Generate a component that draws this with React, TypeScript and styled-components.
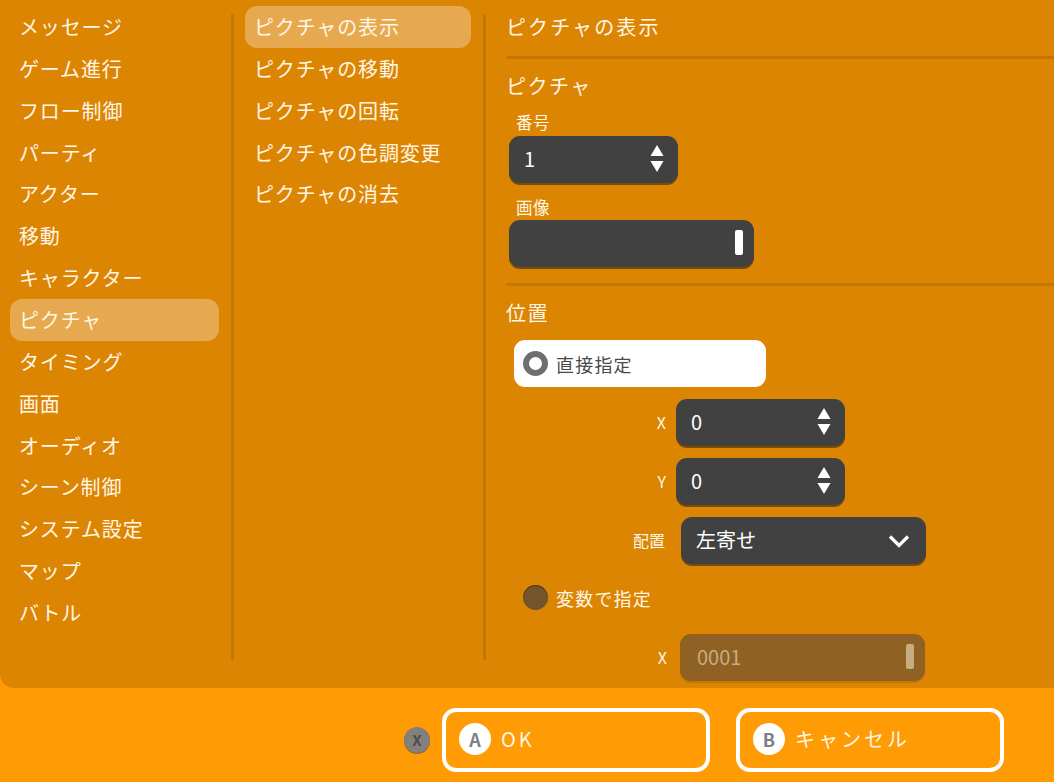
import React from "react";
import styled, { createGlobalStyle } from "styled-components";

const Global = createGlobalStyle`
  html, body { margin: 0; padding: 0; background: #ff9b05; }
  body { font-family: "Noto Sans CJK JP", "Noto Sans", sans-serif; }
`;

const Screen = styled.div`
  width: 1054px;
  height: 782px;
  display: flex;
  flex-direction: column;
  overflow: hidden;
  background: #ff9b05;
  color: #fff6e6;
`;

const Panel = styled.div`
  height: 688px;
  flex: none;
  display: flex;
  background: #dc8503;
  border-bottom-left-radius: 14px;
  overflow: hidden;
`;

const Column = styled.div<{ $width: number; $left: number }>`
  width: ${(p) => p.$width}px;
  flex: none;
  height: 660px;
  padding: 6px 12px 0 ${(p) => p.$left}px;
  box-sizing: border-box;
  display: flex;
  flex-direction: column;
`;

const Divider = styled.div`
  width: 3px;
  height: 646px;
  margin-top: 14px;
  flex: none;
  background: #c47603;
  border-radius: 1px;
`;

const Item = styled.div<{ $active?: boolean }>`
  height: 41.86px;
  flex: none;
  display: flex;
  align-items: center;
  padding: 0 0 1px 9px;
  box-sizing: border-box;
  border-radius: 12px;
  font-size: 20px;
  letter-spacing: 0.85px;
  white-space: nowrap;
  background: ${(p) => (p.$active ? "#e6a94f" : "transparent")};
`;

const Detail = styled.div`
  flex: 1;
  display: flex;
  flex-direction: column;
  padding-left: 20px;
  min-width: 0;
`;

const Title = styled.div`
  height: 56px;
  padding-bottom: 3px;
  box-sizing: border-box;
  flex: none;
  display: flex;
  align-items: center;
  font-size: 20px;
  letter-spacing: 2.1px;
`;

const Rule = styled.div<{ $mt?: number }>`
  height: 3px;
  flex: none;
  margin-top: ${(p) => p.$mt ?? 0}px;
  background: #c47603;
`;

const Section = styled.div`
  height: 54px;
  padding-bottom: 1px;
  box-sizing: border-box;
  flex: none;
  display: flex;
  align-items: center;
  font-size: 20px;
  letter-spacing: 1.5px;
`;

const FieldLabel = styled.div<{ $h: number; $top?: number; $bottom?: number }>`
  height: ${(p) => p.$h}px;
  flex: none;
  display: flex;
  align-items: center;
  box-sizing: border-box;
  padding-left: 10px;
  padding-top: ${(p) => p.$top ?? 0}px;
  padding-bottom: ${(p) => p.$bottom ?? 0}px;
  font-size: 16.5px;
  letter-spacing: 0.5px;
`;

const Row = styled.div<{ $left?: number; $mt?: number }>`
  display: flex;
  align-items: center;
  flex: none;
  margin-left: ${(p) => p.$left ?? 3}px;
  margin-top: ${(p) => p.$mt ?? 0}px;
`;

const RowLabel = styled.div<{ $w: number; $pad?: number }>`
  width: ${(p) => p.$w}px;
  flex: none;
  text-align: right;
  font-size: 16px;
  padding-right: ${(p) => p.$pad ?? 10}px;
  padding-bottom: 2px;
  box-sizing: border-box;
  white-space: nowrap;
`;

const Field = styled.div<{ $w: number; $muted?: boolean; $right?: number }>`
  width: ${(p) => p.$w}px;
  height: 47px;
  flex: none;
  display: flex;
  align-items: center;
  justify-content: space-between;
  box-sizing: border-box;
  padding: 0 ${(p) => p.$right ?? 14}px 2px ${(p) => (p.$muted ? 17 : 15)}px;
  border-radius: 11px;
  background: ${(p) => (p.$muted ? "#8f6122" : "#414141")};
  box-shadow: 0 2px 0 ${(p) => (p.$muted ? "#c47603" : "#7a4c0a")};
  font-size: 20px;
  color: ${(p) => (p.$muted ? "#c9ab82" : "#fff")};
`;

const Cursor = styled.div<{ $muted?: boolean }>`
  width: 8px;
  height: 25px;
  border-radius: 2px;
  background: ${(p) => (p.$muted ? "#c9ab82" : "#fff")};
`;

const ChevronSvg = styled.svg`
  margin-top: 3px;
`;

const Spin = () => (
  <svg width="14" height="29" viewBox="0 0 14 29" aria-hidden="true">
    <path d="M7 1 L13.5 12 H0.5 Z" fill="#fff" />
    <path d="M7 28 L13.5 17 H0.5 Z" fill="#fff" />
  </svg>
);

const Chevron = () => (
  <ChevronSvg width="22" height="14" viewBox="0 0 22 14" aria-hidden="true">
    <path d="M2 2.5 L11 11.5 L20 2.5" fill="none" stroke="#fff" strokeWidth="3.2" />
  </ChevronSvg>
);

const RadioSelected = styled.div`
  width: 252px;
  height: 47px;
  margin-left: 8px;
  flex: none;
  display: flex;
  align-items: center;
  gap: 8px;
  padding-left: 9px;
  box-sizing: border-box;
  background: #fff;
  border-radius: 11px;
  color: #4a4a4a;
  font-size: 18px;
  letter-spacing: 1.2px;
`;

const RadioPlain = styled.div`
  height: 35px;
  margin-left: 17px;
  margin-top: 16px;
  flex: none;
  display: flex;
  align-items: center;
  gap: 8px;
  font-size: 18px;
  letter-spacing: 1.2px;
`;

const RingDot = styled.div`
  width: 25px;
  height: 25px;
  box-sizing: border-box;
  border-radius: 50%;
  border: 6px solid #6f6f6f;
  background: #fff;
  flex: none;
`;

const OffDot = styled.div`
  width: 25px;
  height: 25px;
  border-radius: 50%;
  background: #74542a;
  box-shadow: inset 0 1px 1px #4d3516;
  flex: none;
`;

const Footer = styled.div`
  flex: 1;
  display: flex;
  align-items: center;
  justify-content: flex-end;
  padding: 9px 50px 0 0;
`;

const XBadge = styled.div`
  width: 26px;
  height: 26px;
  border-radius: 50%;
  background: #83807b;
  box-shadow: 0 1px 0 #8a6a2c;
  color: #4c4c52;
  font-size: 15px;
  font-weight: 700;
  display: flex;
  align-items: center;
  justify-content: center;
  margin-right: 12px;
`;

const Button = styled.div<{ $w: number; $ml?: number }>`
  width: ${(p) => p.$w}px;
  height: 64px;
  box-sizing: border-box;
  border: 4.5px solid #fff;
  border-radius: 14px;
  display: flex;
  align-items: center;
  gap: 10px;
  padding: 0 0 2px 13px;
  margin-left: ${(p) => p.$ml ?? 0}px;
  font-size: 20px;
  letter-spacing: 3px;
  color: #fff6e6;
`;

const ButtonKey = styled.div`
  width: 32px;
  height: 32px;
  border-radius: 50%;
  background: #fff;
  color: #7d7f86;
  font-size: 18px;
  font-weight: 700;
  letter-spacing: 0;
  display: flex;
  align-items: center;
  justify-content: center;
  flex: none;
`;

const categories = ["メッセージ", "ゲーム進行", "フロー制御", "パーティ", "アクター", "移動", "キャラクター", "ピクチャ", "タイミング", "画面", "オーディオ", "シーン制御", "システム設定", "マップ", "バトル"];
const commands = ["ピクチャの表示", "ピクチャの移動", "ピクチャの回転", "ピクチャの色調変更", "ピクチャの消去"];

export default function App() {
  return (
    <Screen>
      <Global />
      <Panel>
        <Column $width={231} $left={10}>
          {categories.map((c) => (
            <Item key={c} $active={c === "ピクチャ"}>{c}</Item>
          ))}
        </Column>
        <Divider />
        <Column $width={249} $left={11}>
          {commands.map((c, i) => (
            <Item key={c} $active={i === 0}>{c}</Item>
          ))}
        </Column>
        <Divider />
        <Detail>
          <Title>ピクチャの表示</Title>
          <Rule />
          <Section>ピクチャ</Section>
          <FieldLabel $h={23} $bottom={5}>番号</FieldLabel>
          <Row><Field $w={169}>1<Spin /></Field></Row>
          <FieldLabel $h={37} $top={10}>画像</FieldLabel>
          <Row><Field $w={245} $right={11}><span /><Cursor /></Field></Row>
          <Rule $mt={16} />
          <Section>位置</Section>
          <RadioSelected><RingDot />直接指定</RadioSelected>
          <Row $left={100} $mt={12}>
            <RowLabel $w={70}>X</RowLabel>
            <Field $w={169}>0<Spin /></Field>
          </Row>
          <Row $left={100} $mt={12}>
            <RowLabel $w={70}>Y</RowLabel>
            <Field $w={169}>0<Spin /></Field>
          </Row>
          <Row $left={100} $mt={12}>
            <RowLabel $w={75} $pad={16}>配置</RowLabel>
            <Field $w={245} $right={16}>左寄せ<Chevron /></Field>
          </Row>
          <RadioPlain><OffDot />変数で指定</RadioPlain>
          <Row $left={100} $mt={19}>
            <RowLabel $w={74} $pad={13}>X</RowLabel>
            <Field $w={245} $muted $right={11}>0001<Cursor $muted /></Field>
          </Row>
        </Detail>
      </Panel>
      <Footer>
        <XBadge>X</XBadge>
        <Button $w={268}><ButtonKey>A</ButtonKey>OK</Button>
        <Button $w={268} $ml={26}><ButtonKey>B</ButtonKey>キャンセル</Button>
      </Footer>
    </Screen>
  );
}
